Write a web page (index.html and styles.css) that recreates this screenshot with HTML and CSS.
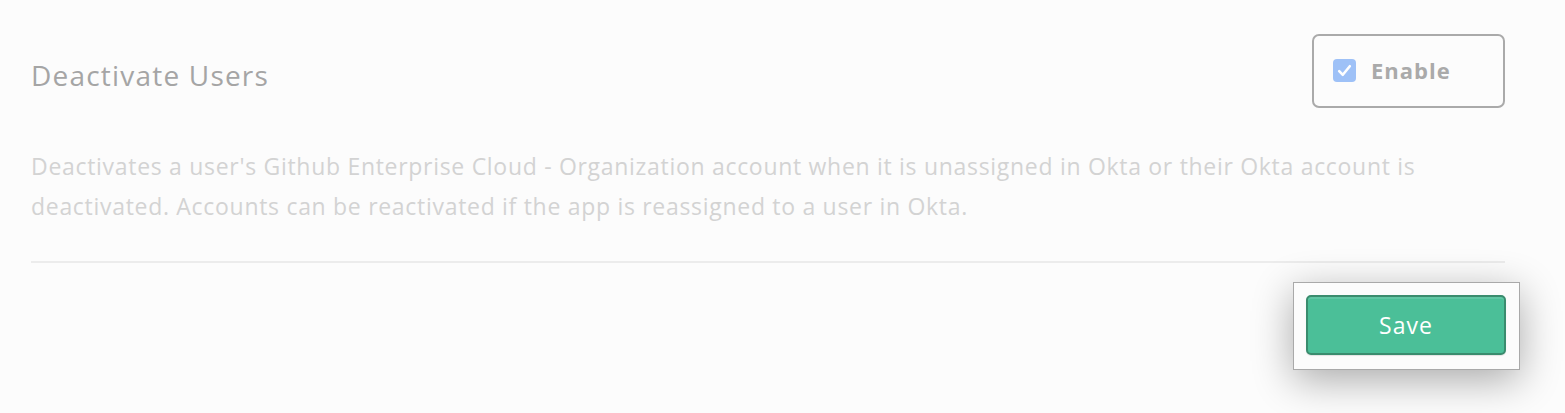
FILE: index.html
```html
<!DOCTYPE html>
<html>
<head>
<meta charset="utf-8">
<link rel="stylesheet" href="styles.css">
</head>
<body>
<div class="page">
  <div class="header">
    <h2 class="title">Deactivate Users</h2>
    <label class="enable">
      <span class="check">
        <svg width="15" height="13" viewBox="0 0 15 13"><path d="M2.2 7.2 L5.8 10.8 L12.8 2.2" fill="none" stroke="#fff" stroke-width="2.6" stroke-linecap="round" stroke-linejoin="round"/></svg>
      </span>
      <span class="enable-text">Enable</span>
    </label>
  </div>
  <p class="desc">Deactivates a user's Github Enterprise Cloud - Organization account when it is unassigned in Okta or their Okta account is deactivated. Accounts can be reactivated if the app is reassigned to a user in Okta.</p>
  <div class="divider"></div>
  <div class="footer">
    <div class="highlight">
      <button class="save">Save</button>
    </div>
  </div>
</div>
</body>
</html>
```
FILE: styles.css
```css
html, body {
  margin: 0;
  background: #fcfcfc;
  height: 100%;
}
.page {
  padding: 34px 60px 0 31px;
  font-family: "Open Sans", "Lato", sans-serif;
}
.header {
  display: flex;
  justify-content: space-between;
  align-items: center;
}
.title {
  margin: 0;
  padding-top: 8px;
  font-size: 28px;
  font-weight: 400;
  color: #a5a5a5;
  letter-spacing: 1.2px;
}
.enable {
  box-sizing: border-box;
  width: 193px;
  height: 74px;
  border: 2px solid #aaaaaa;
  border-radius: 7px;
  display: flex;
  align-items: center;
  padding-left: 19px;
  padding-bottom: 2px;
  gap: 15px;
}
.check {
  width: 23px;
  height: 23px;
  border-radius: 4px;
  background: #9ec1f7;
  display: flex;
  align-items: center;
  justify-content: center;
}
.enable-text {
  font-size: 22px;
  font-weight: 700;
  color: #aaaaaa;
  letter-spacing: 1px;
}
.desc {
  margin: 38px 0 0;
  font-size: 23px;
  line-height: 40px;
  color: #d3d3d3;
  max-width: 1440px;
  letter-spacing: 0.7px;
}
.divider {
  margin-top: 35px;
  height: 2px;
  background: #ececec;
}
.footer {
  display: flex;
  justify-content: flex-end;
  margin-right: -15px;
  margin-top: 19px;
}
.highlight {
  box-sizing: border-box;
  width: 227px;
  height: 88px;
  background: #fcfcfc;
  border: 1px solid #a9a9a9;
  box-shadow: 0 10px 40px rgba(0,0,0,0.33);
  padding: 12px 14px 0 12px;
}
.save {
  box-sizing: border-box;
  width: 200px;
  height: 60px;
  background: #4bbf98;
  border: 2px solid #3a8c6e;
  border-radius: 5px;
  box-shadow: inset 0 2px 0 rgba(255,255,255,0.12), 0 1px 1px rgba(0,0,0,0.1);
  color: #fff;
  font-family: "Open Sans", "Lato", sans-serif;
  font-size: 23px;
  letter-spacing: 1px;
  padding: 0;
}
```
